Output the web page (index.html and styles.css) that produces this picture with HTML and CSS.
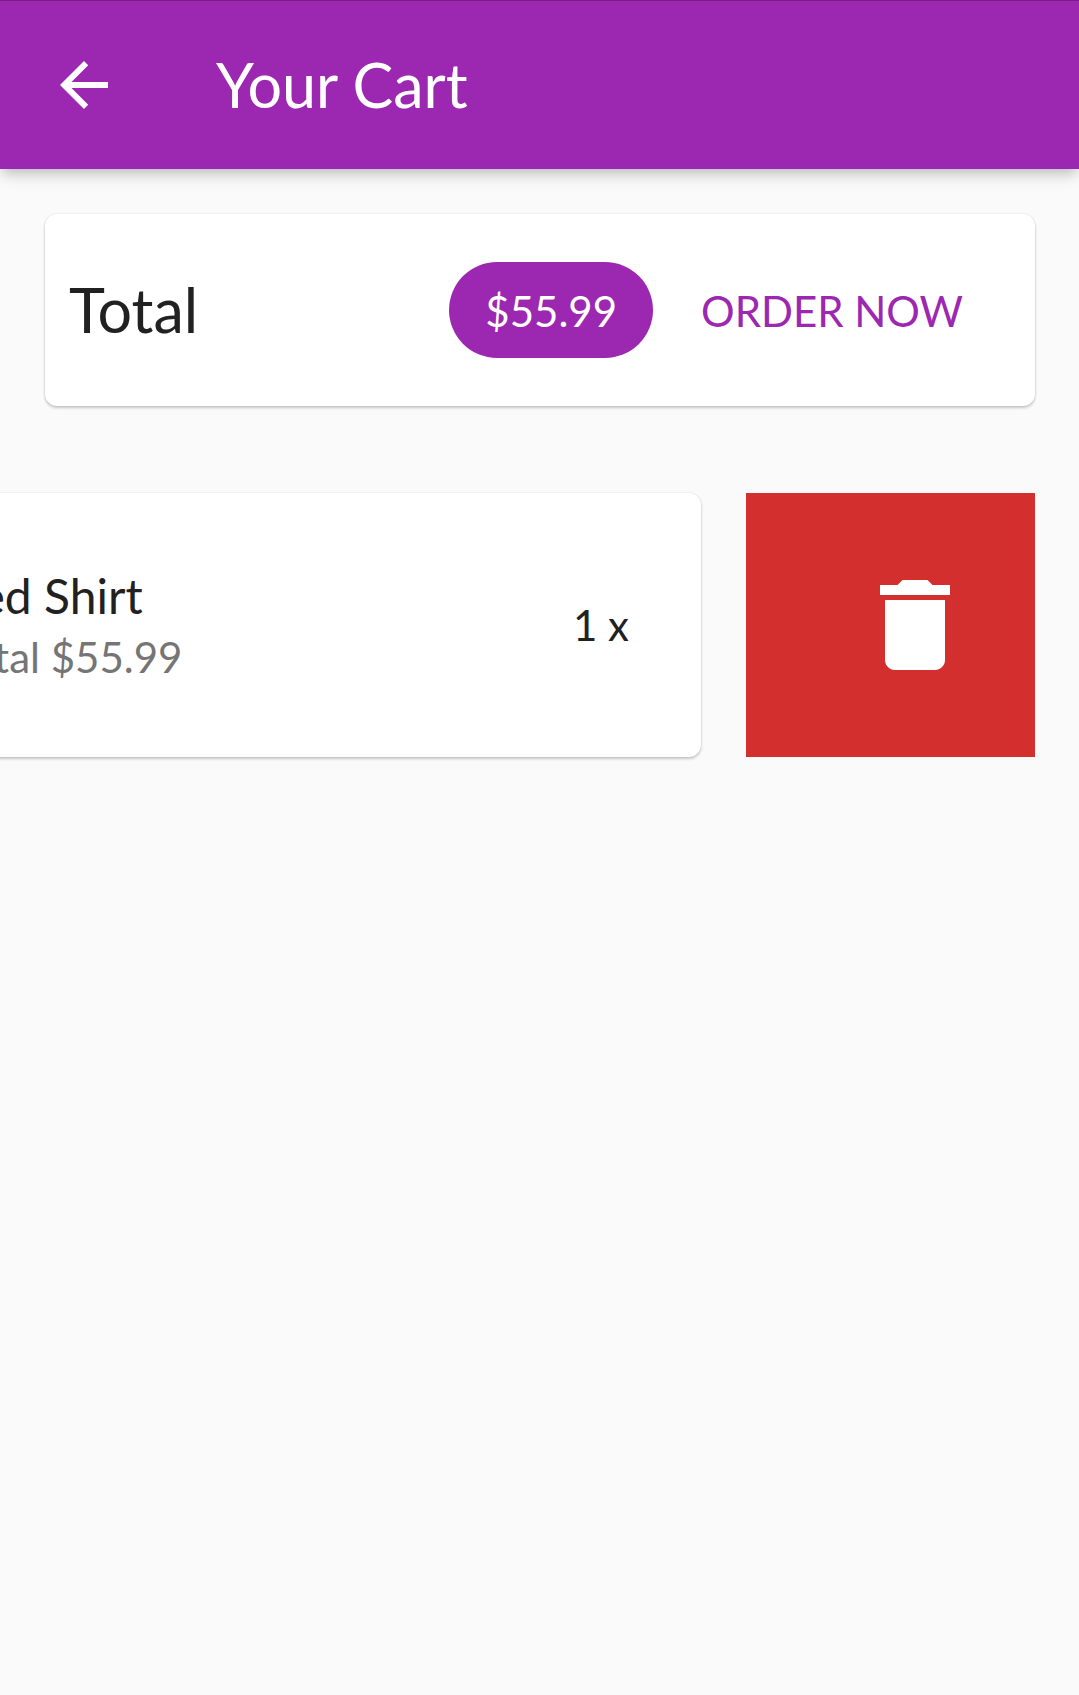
FILE: index.html
```html
<!DOCTYPE html>
<html lang="en">
<head>
  <meta charset="utf-8">
  <meta name="viewport" content="width=device-width, initial-scale=1">
  <title>Your Cart</title>
  <link rel="stylesheet" href="styles.css">
</head>
<body>
  <header class="app-bar">
    <button class="icon-button" type="button">
      <svg class="back-icon" viewBox="0 0 24 24" aria-hidden="true"><path d="M20 11H7.83l5.59-5.59L12 4l-8 8 8 8 1.41-1.41L7.83 13H20v-2z"/></svg>
    </button>
    <h1 class="app-title">Your Cart</h1>
  </header>
  <main class="content">
    <section class="card summary">
      <h2 class="summary-label">Total</h2>
      <span class="chip">$55.99</span>
      <button class="text-button" type="button">ORDER NOW</button>
    </section>
    <ul class="cart-list">
      <li class="swipe-row">
        <article class="card cart-item">
          <div class="item-text">
            <h3 class="item-title">Red Shirt</h3>
            <p class="item-total">Total $55.99</p>
          </div>
          <span class="item-quantity">1 x</span>
        </article>
        <button class="delete-button" type="button">
          <svg class="delete-icon" viewBox="0 0 24 24" aria-hidden="true"><path d="M6 19c0 1.1.9 2 2 2h8c1.1 0 2-.9 2-2V7H6v12zM19 4h-3.5l-1-1h-5l-1 1H5v2h14V4z"/></svg>
        </button>
      </li>
    </ul>
  </main>
</body>
</html>
```

FILE: styles.css
```css
* {
  box-sizing: border-box;
}

body,
h1,
h2,
h3,
p,
ul {
  margin: 0;
  padding: 0;
}

h1,
h2,
h3 {
  font-weight: 400;
}

body {
  min-height: 100vh;
  overflow-x: hidden;
  background: #fafafa;
  color: #212121;
  font-family: Lato, "Liberation Sans", sans-serif;
  font-size: 42px;
  line-height: 52px;
}

button {
  margin: 0;
  padding: 0;
  border: 0;
  background: none;
  color: inherit;
  font: inherit;
  cursor: pointer;
}

svg {
  display: block;
  fill: currentColor;
}

.app-bar {
  display: flex;
  align-items: center;
  height: 169px;
  border-top: 1px solid #771e87;
  background: #9c27b0;
  color: #fff;
  box-shadow: 0 6px 12px -3px rgba(0, 0, 0, 0.2), 0 8px 16px rgba(0, 0, 0, 0.08);
}

.icon-button {
  padding: 48px;
}

.back-icon {
  width: 72px;
  height: 72px;
}

.app-title {
  margin-left: 48px;
  font-size: 61px;
  line-height: 74px;
}

.content {
  display: flex;
  flex-direction: column;
  gap: 87px;
  padding: 45px 44px 45px 45px;
}

.card {
  border-radius: 12px;
  background: #fff;
  box-shadow: 0 2px 3px rgba(0, 0, 0, 0.2), 0 0 2px rgba(0, 0, 0, 0.12);
}

.summary {
  display: flex;
  align-items: center;
  padding: 48px 24px;
}

.summary-label {
  flex: 1;
  font-size: 61px;
  line-height: 74px;
}

.chip {
  padding: 23px 36px 21px;
  border-radius: 48px;
  background: #9c27b0;
  color: #fff;
}

.text-button {
  padding: 23px 48px 21px;
  color: #9c27b0;
}

.cart-list {
  list-style: none;
}

.swipe-row {
  display: flex;
  justify-content: flex-end;
  gap: 45px;
}

.cart-item {
  display: flex;
  flex: 0 0 100%;
  align-items: center;
  justify-content: space-between;
  min-height: 264px;
  padding: 24px 72px 24px 240px;
}

.item-title {
  font-size: 48px;
  line-height: 58px;
}

.item-total {
  margin-top: 6px;
  color: #757575;
}

.delete-button {
  display: flex;
  flex: 0 0 289px;
  align-items: center;
  justify-content: flex-end;
  padding-right: 60px;
  background: #d32f2f;
  color: #fff;
}

.delete-icon {
  width: 120px;
  height: 120px;
}
```
